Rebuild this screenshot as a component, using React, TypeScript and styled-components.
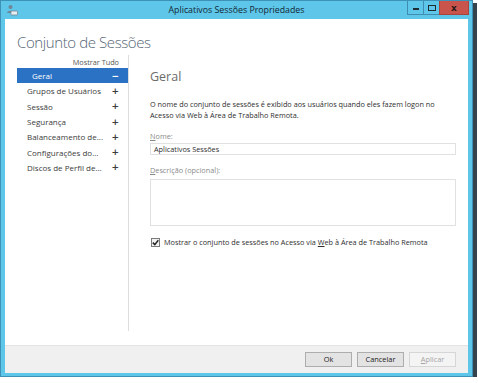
import React from "react";
import styled, { createGlobalStyle } from "styled-components";

const GlobalStyle = createGlobalStyle`
	html, body {
		margin: 0;
		padding: 0;
		background: #ffffff;
	}
	body {
		font-family: "Open Sans", "Noto Sans", Arial, sans-serif;
		color: #333;
	}
`;

type NavItemDef = { text: string; selected?: boolean };

const navItems: NavItemDef[] = [
	{ text: "Geral", selected: true },
	{ text: "Grupos de Usuários" },
	{ text: "Sessão" },
	{ text: "Segurança" },
	{ text: "Balanceamento de..." },
	{ text: "Configurações do..." },
	{ text: "Discos de Perfil de..." },
];

const AppIcon = () => (
	<svg width="12" height="12" viewBox="0 0 12 12">
		<circle cx="4.5" cy="3" r="2" fill="#6f8796" />
		<path d="M1 9 C1 6 8 6 8 9 Z" fill="#6f8796" />
		<rect x="5" y="7" width="6.5" height="4" rx="0.5" fill="#e8eef2" stroke="#6f8796" strokeWidth="0.8" />
	</svg>
);

const CheckMark = () => (
	<svg width="7" height="7" viewBox="0 0 7 7">
		<path d="M0.8 3.6 L2.8 5.6 L6.3 1.2" fill="none" stroke="#222" strokeWidth="1.5" />
	</svg>
);

const App = (): JSX.Element => {
	return (
		<>
			<GlobalStyle />
			<Frame>
				<TitleBar>
					<TitleIcon>
						<AppIcon />
					</TitleIcon>
					<TitleText>Aplicativos Sessões Propriedades</TitleText>
					<CaptionButtons>
						<CaptionButton>
							<MinGlyph />
						</CaptionButton>
						<CaptionButton>
							<MaxGlyph />
						</CaptionButton>
						<CaptionButton close>
							<CloseGlyph>x</CloseGlyph>
						</CaptionButton>
					</CaptionButtons>
				</TitleBar>
				<Content>
					<Header>Conjunto de Sessões</Header>
					<Body>
						<Nav>
							<ShowAll>Mostrar Tudo</ShowAll>
							{navItems.map((item) => (
								<NavRow key={item.text} selected={!!item.selected}>
									<span>{item.text}</span>
									<NavSign>{item.selected ? "−" : "+"}</NavSign>
								</NavRow>
							))}
						</Nav>
						<Pane>
							<PaneTitle>Geral</PaneTitle>
							<Intro>
								O nome do conjunto de sessões é exibido aos usuários quando eles fazem logon no
								<br />
								Acesso via Web à Área de Trabalho Remota.
							</Intro>
							<FieldLabel>
								<u>N</u>ome:
							</FieldLabel>
							<TextBox>Aplicativos Sessões</TextBox>
							<FieldLabel wide>
								<u>D</u>escrição (opcional):
							</FieldLabel>
							<TextArea />
							<CheckRow>
								<CheckBox>
									<CheckMark />
								</CheckBox>
								<span>
									Mostrar o conjunto de sessões no Acesso via <u>W</u>eb à Área de Trabalho Remota
								</span>
							</CheckRow>
						</Pane>
					</Body>
					<Footer>
						<DialogButton>Ok</DialogButton>
						<DialogButton>Cancelar</DialogButton>
						<DialogButton disabled>
							<u>A</u>plicar
						</DialogButton>
					</Footer>
				</Content>
			</Frame>
		</>
	);
};

export default App;

const Frame = styled.div`
	width: 473px;
	height: 377px;
	box-sizing: border-box;
	border: 1px solid #3e92b8;
	background: #5ec6e9;
	padding: 0 4px 3px 4px;
	display: flex;
	flex-direction: column;
	box-shadow: 4px 3px 0 #35434d;
`;

const TitleBar = styled.div`
	height: 18px;
	display: grid;
	grid-template-columns: 1fr auto 1fr;
	align-items: start;
`;

const TitleIcon = styled.div`
	padding: 3px 0 0 1px;
	display: flex;
`;

const TitleText = styled.div`
	font-size: 8.8px;
	line-height: 19px;
	color: #122835;
`;

const CaptionButtons = styled.div`
	justify-self: end;
	display: flex;
	margin-right: -1px;
`;

type CaptionButtonProps = { close?: boolean };
const CaptionButton = styled.div<CaptionButtonProps>`
	width: ${(p) => (p.close ? "30px" : "17px")};
	height: 14px;
	box-sizing: border-box;
	border: 1px solid ${(p) => (p.close ? "#a8443e" : "#3f8eb2")};
	border-top: none;
	margin-left: -1px;
	background: ${(p) => (p.close ? "#c9544c" : "#5ec6e9")};
	display: flex;
	align-items: center;
	justify-content: center;
`;

const MinGlyph = styled.div`
	width: 6px;
	height: 2px;
	margin-top: 2px;
	background: #1d2c35;
`;

const MaxGlyph = styled.div`
	width: 6px;
	height: 4px;
	border: 1.5px solid #1d2c35;
`;

const CloseGlyph = styled.span`
	font-family: "DejaVu Sans", sans-serif;
	font-size: 9px;
	font-weight: bold;
	line-height: 10px;
	color: #2a1a18;
`;

const Content = styled.div`
	flex: 1;
	background: #ffffff;
	display: flex;
	flex-direction: column;
	min-height: 0;
`;

const Header = styled.div`
	height: 36px;
	box-sizing: border-box;
	padding: 12px 0 0 12px;
	font-size: 15px;
	font-weight: 300;
	letter-spacing: -0.4px;
	line-height: 22px;
	color: #566674;
`;

const Body = styled.div`
	flex: 1;
	display: flex;
	padding: 0 12px 14px 12px;
	min-height: 0;
`;

const Nav = styled.div`
	width: 111px;
	border-right: 1px solid #dedede;
	padding-top: 2px;
	font-size: 8px;
	color: #3c3c3c;
`;

const ShowAll = styled.div`
	text-align: right;
	padding-right: 9px;
	line-height: 11px;
	font-size: 7.3px;
	color: #555;
`;

type NavRowProps = { selected: boolean };
const NavRow = styled.div<NavRowProps>`
	height: 15.3px;
	display: flex;
	align-items: center;
	justify-content: space-between;
	padding: 0 9px 0 ${(p) => (p.selected ? "15px" : "10px")};
	white-space: nowrap;
	${(p) => (p.selected ? `background: #2b72c4; color: #ffffff;` : "")}
`;

const NavSign = styled.span`
	font-family: "DejaVu Sans", sans-serif;
	font-weight: bold;
	font-size: 9px;
`;

const Pane = styled.div`
	flex: 1;
	padding-left: 21px;
	display: flex;
	flex-direction: column;
	font-size: 7.3px;
`;

const PaneTitle = styled.div`
	margin-top: 14px;
	font-size: 12.5px;
	line-height: 16px;
	color: #6b6b6b;
`;

const Intro = styled.div`
	margin-top: 14px;
	line-height: 11px;
	color: #2e2e2e;
`;

type FieldLabelProps = { wide?: boolean };
const FieldLabel = styled.div<FieldLabelProps>`
	margin-top: 10px;
	margin-bottom: ${(p) => (p.wide ? "3px" : "1px")};
	line-height: 11px;
	color: #8a8a8a;
`;

const TextBox = styled.div`
	height: 12px;
	box-sizing: border-box;
	border: 1px solid #e1e1e1;
	padding-left: 3px;
	line-height: 10px;
	color: #2e2e2e;
`;

const TextArea = styled.div`
	height: 47px;
	box-sizing: border-box;
	border: 1px solid #e1e1e1;
`;

const CheckRow = styled.div`
	margin-top: 11px;
	display: flex;
	align-items: center;
	gap: 4px;
	padding-left: 1px;
	color: #2e2e2e;
	line-height: 11px;
`;

const CheckBox = styled.span`
	width: 9px;
	height: 9px;
	box-sizing: border-box;
	border: 1px solid #7a7a7a;
	background: #f2f2f2;
	display: flex;
	align-items: center;
	justify-content: center;
`;

const Footer = styled.div`
	height: 28px;
	box-sizing: border-box;
	border-top: 1px solid #e3e3e3;
	background: #f0f0f0;
	display: flex;
	align-items: center;
	justify-content: flex-end;
	gap: 5px;
	padding-right: 12px;
`;

const DialogButton = styled.button`
	width: 47px;
	height: 15px;
	padding: 0;
	box-sizing: border-box;
	font-family: "Open Sans", "Noto Sans", Arial, sans-serif;
	font-size: 7.4px;
	line-height: 13px;
	color: #222;
	background: #e3e3e3;
	border: 1px solid #adadad;
	&:disabled {
		color: #a5a5a5;
		background: #f4f4f4;
		border-color: #d6d6d6;
	}
`;
